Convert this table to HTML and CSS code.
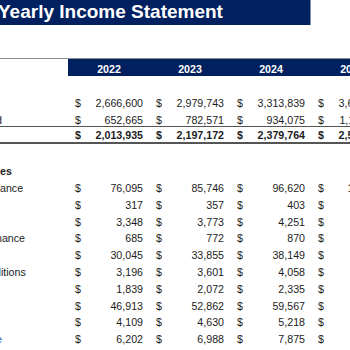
FILE: index.html
```html
<!DOCTYPE html>
<html lang="en">
<head>
<meta charset="utf-8">
<title>Yearly Income Statement</title>
<link rel="stylesheet" href="styles.css">
</head>
<body>
<div class="sheet">
  <div class="title-row">
    <div class="title">Yearly Income Statement</div>
  </div>
  <div class="gap"></div>

  <div class="row head">
    <div class="cell label"></div>
    <div class="cell year">2022</div>
    <div class="cell year">2023</div>
    <div class="cell year">2024</div>
    <div class="cell year">2025</div>
  </div>

  <div class="row"></div>

  <div class="row">
    <div class="cell label"></div>
    <div class="cell amt"><span>$</span><span>2,666,600</span></div>
    <div class="cell amt"><span>$</span><span>2,979,743</span></div>
    <div class="cell amt"><span>$</span><span>3,313,839</span></div>
    <div class="cell amt"><span>$</span><span>3,686,158</span></div>
  </div>
  <div class="row">
    <div class="cell label cut4">d</div>
    <div class="cell amt"><span>$</span><span>652,665</span></div>
    <div class="cell amt"><span>$</span><span>782,571</span></div>
    <div class="cell amt"><span>$</span><span>934,075</span></div>
    <div class="cell amt"><span>$</span><span>1,113,468</span></div>
  </div>
  <div class="row total">
    <div class="cell label"></div>
    <div class="cell amt"><span>$</span><span>2,013,935</span></div>
    <div class="cell amt"><span>$</span><span>2,197,172</span></div>
    <div class="cell amt"><span>$</span><span>2,379,764</span></div>
    <div class="cell amt"><span>$</span><span>2,572,690</span></div>
  </div>

  <div class="row"></div>

  <div class="row">
    <div class="cell label bold">es</div>
  </div>
  <div class="row">
    <div class="cell label">ance</div>
    <div class="cell amt"><span>$</span><span>76,095</span></div>
    <div class="cell amt"><span>$</span><span>85,746</span></div>
    <div class="cell amt"><span>$</span><span>96,620</span></div>
    <div class="cell amt"><span>$</span><span>108,872</span></div>
  </div>
  <div class="row">
    <div class="cell label"></div>
    <div class="cell amt"><span>$</span><span>317</span></div>
    <div class="cell amt"><span>$</span><span>357</span></div>
    <div class="cell amt"><span>$</span><span>403</span></div>
    <div class="cell amt"><span>$</span><span>454</span></div>
  </div>
  <div class="row">
    <div class="cell label"></div>
    <div class="cell amt"><span>$</span><span>3,348</span></div>
    <div class="cell amt"><span>$</span><span>3,773</span></div>
    <div class="cell amt"><span>$</span><span>4,251</span></div>
    <div class="cell amt"><span>$</span><span>4,789</span></div>
  </div>
  <div class="row">
    <div class="cell label cut4">nance</div>
    <div class="cell amt"><span>$</span><span>685</span></div>
    <div class="cell amt"><span>$</span><span>772</span></div>
    <div class="cell amt"><span>$</span><span>870</span></div>
    <div class="cell amt"><span>$</span><span>980</span></div>
  </div>
  <div class="row">
    <div class="cell label"></div>
    <div class="cell amt"><span>$</span><span>30,045</span></div>
    <div class="cell amt"><span>$</span><span>33,855</span></div>
    <div class="cell amt"><span>$</span><span>38,149</span></div>
    <div class="cell amt"><span>$</span><span>42,985</span></div>
  </div>
  <div class="row">
    <div class="cell label cut5">ditions</div>
    <div class="cell amt"><span>$</span><span>3,196</span></div>
    <div class="cell amt"><span>$</span><span>3,601</span></div>
    <div class="cell amt"><span>$</span><span>4,058</span></div>
    <div class="cell amt"><span>$</span><span>4,572</span></div>
  </div>
  <div class="row">
    <div class="cell label"></div>
    <div class="cell amt"><span>$</span><span>1,839</span></div>
    <div class="cell amt"><span>$</span><span>2,072</span></div>
    <div class="cell amt"><span>$</span><span>2,335</span></div>
    <div class="cell amt"><span>$</span><span>2,631</span></div>
  </div>
  <div class="row">
    <div class="cell label"></div>
    <div class="cell amt"><span>$</span><span>46,913</span></div>
    <div class="cell amt"><span>$</span><span>52,862</span></div>
    <div class="cell amt"><span>$</span><span>59,567</span></div>
    <div class="cell amt"><span>$</span><span>67,121</span></div>
  </div>
  <div class="row">
    <div class="cell label"></div>
    <div class="cell amt"><span>$</span><span>4,109</span></div>
    <div class="cell amt"><span>$</span><span>4,630</span></div>
    <div class="cell amt"><span>$</span><span>5,218</span></div>
    <div class="cell amt"><span>$</span><span>5,879</span></div>
  </div>
  <div class="row">
    <div class="cell label cut4 link">e</div>
    <div class="cell amt"><span>$</span><span>6,202</span></div>
    <div class="cell amt"><span>$</span><span>6,988</span></div>
    <div class="cell amt"><span>$</span><span>7,875</span></div>
    <div class="cell amt"><span>$</span><span>8,873</span></div>
  </div>
</div>
</body>
</html>
```
FILE: styles.css
```css
* {
  box-sizing: border-box;
}

html,
body {
  margin: 0;
  padding: 0;
  background: #ffffff;
}

body {
  width: 350px;
  height: 350px;
  overflow: hidden;
  font-family: "Liberation Sans", Arial, sans-serif;
  font-size: 10.67px;
  color: #1c1c1c;
}

.sheet {
  width: 392px;
}

.title-row {
  display: flex;
  height: 25px;
}

.title {
  width: 311px;
  height: 25px;
  background: #002060;
  border-right: 1px solid #7d8fb3;
  color: #ffffff;
  font-weight: bold;
  font-size: 19px;
  line-height: 23px;
  white-space: nowrap;
  overflow: hidden;
  text-indent: -2px;
}

.gap {
  height: 34px;
  border-bottom: 1px solid #8c8c8c;
}

.row {
  display: grid;
  grid-template-columns: 68px repeat(4, 81px);
  height: 16.8px;
  line-height: 12px;
  white-space: nowrap;
}

.row.head {
  height: 17px;
}

.cell {
  padding-top: 4px;
  overflow: hidden;
}

.year {
  background: #002060;
  color: #ffffff;
  font-weight: bold;
  text-align: center;
  padding-left: 1px;
}

.amt {
  display: flex;
  justify-content: space-between;
  padding-left: 7px;
  padding-right: 6px;
}

.label.bold {
  font-weight: bold;
}

.label.cut4 {
  text-indent: -4px;
}

.label.cut5 {
  text-indent: -5px;
}

.label.link {
  color: #1f5fbf;
}

.row.total {
  height: 18px;
  border-top: 1px solid #555555;
  border-bottom: 2px solid #555555;
  font-weight: bold;
}

.row.total .cell {
  padding-top: 2px;
}
```
